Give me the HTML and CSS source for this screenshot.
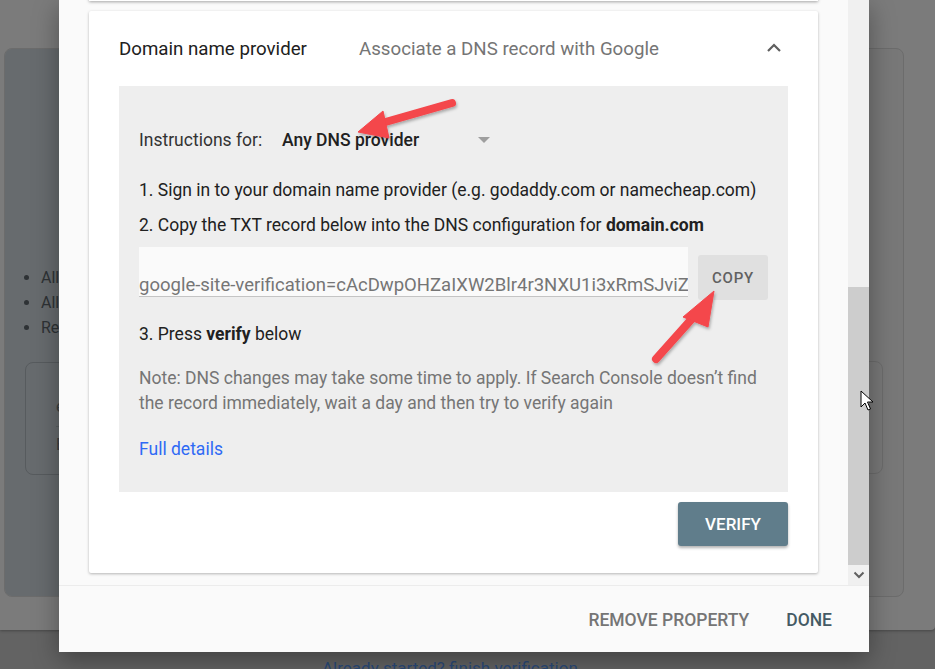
FILE: index.html
```html
<!DOCTYPE html>
<html>
<head>
<meta charset="utf-8">
<link rel="stylesheet" href="styles.css">
</head>
<body>
<div class="page">
  <div class="bg-card">
    <div class="bg-left">
      <ul class="bg-list">
        <li>All items</li>
        <li>All issues</li>
        <li>Reports</li>
      </ul>
      <div class="bg-box">
        <div class="bg-box-l1">example</div>
        <div class="bg-box-l2">Enter</div>
      </div>
    </div>
    <div class="bg-right">
      <div class="bg-box-r"></div>
    </div>
  </div>
</div>
<div class="bg-link">Already started? finish verification</div>

<div class="modal">
  <div class="scroll">
    <div class="scroll-content">
      <div class="prev-card"></div>
      <div class="card">
        <div class="card-head">
          <span class="head-title">Domain name provider</span>
          <span class="head-sub">Associate a DNS record with Google</span>
          <svg class="chev" width="16" height="12" viewBox="0 0 16 12"><path d="M2 10 L8 4 L14 10" fill="none" stroke="#5f5f5f" stroke-width="2.2"/></svg>
        </div>
        <div class="panel">
          <div class="instr">
            <span class="instr-label">Instructions for:</span>
            <span class="instr-value">Any DNS provider</span>
            <span class="caret"></span>
          </div>
          <div class="step step1">1. Sign in to your domain name provider (e.g. godaddy.com or namecheap.com)</div>
          <div class="step">2. Copy the TXT record below into the DNS configuration for <b>domain.com</b></div>
          <div class="field-row">
            <div class="field">google-site-verification=cAcDwpOHZaIXW2Blr4r3NXU1i3xRmSJviZ8</div>
            <div class="copy">COPY</div>
          </div>
          <div class="step3">3. Press <b>verify</b> below</div>
          <div class="note">Note: DNS changes may take some time to apply. If Search Console doesn’t find the record immediately, wait a day and then try to verify again</div>
          <div class="details">Full details</div>
        </div>
        <div class="verify-row"><div class="verify">VERIFY</div></div>
      </div>
    </div>
    <div class="scrollbar">
      <div class="sb-space"></div>
      <div class="sb-thumb"></div>
      <div class="sb-btn"><svg width="12" height="8" viewBox="0 0 12 8"><path d="M1.5 1.5 L6 6 L10.5 1.5" fill="none" stroke="#606060" stroke-width="2"/></svg></div>
    </div>
  </div>
  <div class="footer">
    <span class="btn-remove">REMOVE PROPERTY</span>
    <span class="btn-done">DONE</span>
  </div>
</div>

<svg class="arrows" width="935" height="669" viewBox="0 0 935 669">
  <defs>
    <filter id="sh" x="-20%" y="-20%" width="140%" height="140%">
      <feDropShadow dx="1" dy="2" stdDeviation="1.5" flood-color="#000" flood-opacity="0.3"/>
    </filter>
  </defs>
  <g fill="#f4464b" stroke="#f4464b" filter="url(#sh)">
    <line x1="452" y1="103" x2="375" y2="125" stroke-width="8" stroke-linecap="round"/>
    <polygon points="358,132 383,111 389,138" stroke-width="1" stroke-linejoin="round"/>
    <line x1="656" y1="359" x2="698" y2="312" stroke-width="8" stroke-linecap="round"/>
    <polygon points="714,291 683,317 708,327" stroke-width="1" stroke-linejoin="round"/>
  </g>
</svg>
<svg class="cursor" width="14" height="22" viewBox="0 0 14 22">
  <path d="M1 1 L1 17 L5 13 L8 20 L10.5 19 L7.5 12 L13 12 Z" fill="#fff" stroke="#000" stroke-width="1" stroke-linejoin="round"/>
</svg>
</body>
</html>
```

FILE: styles.css
```css
* { box-sizing: border-box; }
html, body { margin: 0; padding: 0; }
body {
  width: 935px;
  height: 669px;
  overflow: hidden;
  background: #636363;
  font-family: Roboto, "Noto Sans", Arial, sans-serif;
  position: relative;
}

/* background page */
.page {
  height: 630px;
  background: #7b7b7b;
  padding: 48px 0 0 4px;
  border-bottom-right-radius: 4px;
  box-shadow: 0 1px 3px rgba(0,0,0,0.3);
}
.bg-card {
  width: 900px;
  height: 549px;
  border: 1px solid #6c6c6c;
  border-radius: 8px;
  background: #787878;
  display: flex;
  overflow: hidden;
}
.bg-left {
  width: 520px;
  background: #676b6e;
  padding-top: 216px;
}
.bg-list {
  margin: 0;
  padding-left: 36px;
  color: #2e3235;
  font-size: 16px;
  line-height: 25px;
}
.bg-box {
  margin: 22px 0 0 20px;
  width: 460px;
  height: 113px;
  border: 1px solid #575b5e;
  border-radius: 8px;
  padding: 34px 0 0 30px;
  color: #3a3e41;
  font-size: 16px;
}
.bg-box-l1 { padding-bottom: 10px; border-bottom: 1px solid #5a5e61; width: 200px; }
.bg-box-l2 { padding-top: 8px; }
.bg-right {
  flex: 1;
  display: flex;
  justify-content: flex-end;
  padding: 312px 20px 0 0;
}
.bg-box-r {
  width: 200px;
  height: 113px;
  border: 1px solid #6c6c6c;
  border-radius: 8px;
}
.bg-link {
  margin: 28px 0 0 322px;
  color: #2b4a78;
  font-size: 17px;
  line-height: 20px;
}

/* modal */
.modal {
  position: absolute;
  left: 59px;
  top: 0;
  width: 810px;
  height: 652px;
  background: #fafafa;
  box-shadow: 0 8px 24px rgba(0,0,0,0.35);
  display: flex;
  flex-direction: column;
}
.scroll {
  height: 585px;
  display: flex;
}
.scroll-content {
  width: 789px;
  overflow: hidden;
  padding: 0 30px 0 30px;
}
.prev-card {
  height: 20px;
  margin-top: -19px;
  background: #fff;
  box-shadow: 0 1px 3px rgba(0,0,0,0.35);
}
.card {
  margin-top: 10px;
  height: 562px;
  background: #fff;
  border-radius: 2px;
  box-shadow: 0 1px 3px rgba(0,0,0,0.28);
}
.card-head {
  height: 75px;
  display: flex;
  align-items: center;
  padding: 0 36px 0 30px;
  font-size: 18.7px;
}
.head-title { color: #212121; width: 240px; }
.head-sub { color: #757575; flex: 1; }
.chev { display: block; margin-top: -4px; }

.panel {
  margin: 0 30px;
  height: 406px;
  background: #eeeeee;
  padding: 37px 20px 0 20px;
  color: #212121;
  font-size: 17.5px;
}
.instr {
  height: 34px;
  display: flex;
  align-items: center;
}
.instr-label { width: 143px; color: #333; }
.instr-value { font-weight: 500; color: #212121; width: 196px; }
.caret {
  width: 0; height: 0;
  border-left: 6px solid transparent;
  border-right: 6px solid transparent;
  border-top: 6px solid #9e9e9e;
}
.step { line-height: 35px; }
.step1 { margin-top: 16px; }
.step b, .step3 b { font-weight: 700; }
.field-row {
  margin-top: 4px;
  display: flex;
  align-items: flex-start;
}
.field {
  width: 549px;
  height: 50px;
  background: #fafafa;
  border-bottom: 1px solid #c4c4c4;
  padding-top: 26px;
  line-height: 24px;
  color: #757575;
  font-size: 18.5px;
  white-space: nowrap;
  overflow: hidden;
}
.copy {
  margin: 8px 0 0 10px;
  width: 70px;
  height: 45px;
  background: #e0e0e0;
  border-radius: 3px;
  display: flex;
  align-items: center;
  justify-content: center;
  color: #616161;
  font-size: 15px;
  font-weight: 500;
  letter-spacing: 0.8px;
}
.step3 { margin-top: 22px; line-height: 24px; }
.note {
  margin-top: 20px;
  line-height: 25px;
  color: #757575;
  width: 630px;
}
.details {
  margin-top: 21px;
  line-height: 24px;
  color: #2e6af5;
}
.verify-row {
  margin-top: 10px;
  padding-right: 30px;
  display: flex;
  justify-content: flex-end;
}
.verify {
  width: 110px;
  height: 44px;
  background: #607d8b;
  color: #fff;
  border-radius: 3px;
  box-shadow: 0 2px 3px rgba(0,0,0,0.3);
  display: flex;
  align-items: center;
  justify-content: center;
  font-size: 17px;
  font-weight: 500;
}

/* scrollbar */
.scrollbar {
  width: 21px;
  background: #f0f0f0;
  display: flex;
  flex-direction: column;
}
.sb-space { height: 287px; }
.sb-thumb { height: 278px; background: #cdcdcd; }
.sb-btn {
  height: 20px;
  display: flex;
  align-items: center;
  justify-content: center;
}
.sb-btn svg { display: block; }

/* footer */
.footer {
  flex: 1;
  border-top: 1px solid #ececec;
  display: flex;
  align-items: center;
  justify-content: flex-end;
  padding: 2px 37px 0 0;
  gap: 37px;
  font-size: 17.5px;
  font-weight: 500;
}
.btn-remove { color: #757575; }
.btn-done { color: #455a64; }

.arrows {
  position: absolute;
  left: 0;
  top: 0;
  pointer-events: none;
}
.cursor {
  position: absolute;
  left: 860px;
  top: 390px;
}
```
